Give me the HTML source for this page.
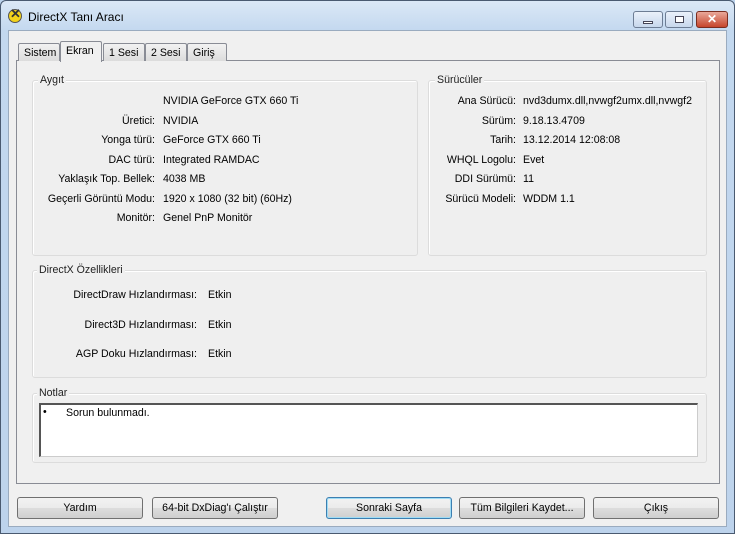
<!DOCTYPE html>
<html><head><meta charset="utf-8"><style>
*{margin:0;padding:0;box-sizing:border-box}
body{width:735px;height:534px;overflow:hidden;background:#bcd3ec;font-family:"Liberation Sans",sans-serif;font-size:10.6px;color:#000;position:relative}
.a{position:absolute}
.win{left:0;top:0;width:735px;height:534px;background:linear-gradient(#dbe8f6,#c3d8ef 30px,#bdd3ec);border:1px solid #4a5a70;border-radius:6px 6px 0 0}
.client{left:8px;top:30px;width:719px;height:497px;background:#f0f0f0;border:1px solid #9aabbf}
.panel{left:16px;top:60px;width:704px;height:424px;background:#f0f0f0;border:1px solid #898c95}
.grp{border:1px solid #dcdcdc;border-radius:3px;background:#efefef;box-shadow:inset 1px 1px 0 #fff}
.lg{background:#f0f0f0;padding:0 2px;color:#222}
.r{text-align:right;width:200px}
.tab{top:43px;height:18px;border:1px solid #898c95;border-bottom:none;background:linear-gradient(#f2f2f2,#dcdcdc);padding:3px 5px 0;border-radius:2px 2px 0 0}
.btn{top:497px;height:22px;border:1px solid #707070;border-radius:3px;background:linear-gradient(#f2f2f2 0,#ebebeb 50%,#dddddd 51%,#cfcfcf);text-align:center;line-height:20px}
.cb{top:11px;height:17px;border:1px solid #6d7d94;border-radius:3px;background:linear-gradient(#eaf1fa,#c7d7ec)}
</style></head><body>
<div class="a win"></div>
<div class="a" style="left:8px;top:9px;width:14px;height:14px;border-radius:50%;background:#f2d21a;border:1px solid #555"></div>
<div class="a" style="left:10px;top:6px;font-size:13px;font-weight:bold;color:#333">✕</div>
<div class="a" style="left:28px;top:10px;font-size:12px">DirectX Tanı Aracı</div>
<div class="a cb" style="left:633px;width:30px"><div class="a" style="left:9px;top:9px;width:10px;height:3px;background:#fff;border:1px solid #445"></div></div>
<div class="a cb" style="left:665px;width:28px"><div class="a" style="left:9px;top:4px;width:9px;height:7px;border:1px solid #445;background:#fff"></div></div>
<div class="a cb" style="left:696px;width:32px;background:linear-gradient(#e9a89a,#c6452c);border-color:#7a2d20;color:#fff;font-weight:bold;text-align:center;font-size:12px;line-height:15px">✕</div>
<div class="a client"></div>
<div class="a panel"></div>
<div class="a tab" style="left:18px;width:42px">Sistem</div>
<div class="a tab" style="left:60px;top:41px;height:21px;background:#f0f0f0;z-index:2;width:42px">Ekran</div>
<div class="a tab" style="left:103px;width:42px">1 Sesi</div>
<div class="a tab" style="left:145px;width:42px">2 Sesi</div>
<div class="a tab" style="left:187px;width:40px">Giriş</div>

<div class="a grp" style="left:32px;top:80px;width:386px;height:176px"></div>
<div class="a lg" style="left:38px;top:74px">Aygıt</div>
<div class="a grp" style="left:428px;top:80px;width:279px;height:176px"></div>
<div class="a lg" style="left:435px;top:74px">Sürücüler</div>
<div class="a grp" style="left:32px;top:270px;width:675px;height:108px"></div>
<div class="a lg" style="left:37px;top:264px">DirectX Özellikleri</div>
<div class="a grp" style="left:32px;top:393px;width:675px;height:70px"></div>
<div class="a lg" style="left:37px;top:387px">Notlar</div>
<div class="a" style="left:39px;top:403px;width:659px;height:54px;background:#fff;border:1px solid #ccc;border-top:2px solid #555;border-left:2px solid #555"></div>
<div class="a" style="left:43px;top:406px">•</div>
<div class="a" style="left:66px;top:407px">Sorun bulunmadı.</div>

<div class="a r" style="left:-45px;top:92px;line-height:19.5px">&nbsp;<br>Üretici:<br>Yonga türü:<br>DAC türü:<br>Yaklaşık Top. Bellek:<br>Geçerli Görüntü Modu:<br>Monitör:</div>
<div class="a" style="left:163px;top:92px;line-height:19.5px">NVIDIA GeForce GTX 660 Ti<br>NVIDIA<br>GeForce GTX 660 Ti<br>Integrated RAMDAC<br>4038 MB<br>1920 x 1080 (32 bit) (60Hz)<br>Genel PnP Monitör</div>
<div class="a r" style="left:316px;top:92px;line-height:19.5px">Ana Sürücü:<br>Sürüm:<br>Tarih:<br>WHQL Logolu:<br>DDI Sürümü:<br>Sürücü Modeli:</div>
<div class="a" style="left:523px;top:92px;line-height:19.5px;white-space:nowrap;width:178px;overflow:hidden">nvd3dumx.dll,nvwgf2umx.dll,nvwgf2<br>9.18.13.4709<br>13.12.2014 12:08:08<br>Evet<br>11<br>WDDM 1.1</div>
<div class="a r" style="left:-3px;top:281px;line-height:29.5px">DirectDraw Hızlandırması:<br>Direct3D Hızlandırması:<br>AGP Doku Hızlandırması:</div>
<div class="a" style="left:208px;top:281px;line-height:29.5px">Etkin<br>Etkin<br>Etkin</div>

<div class="a btn" style="left:17px;width:126px">Yardım</div>
<div class="a btn" style="left:152px;width:126px">64-bit DxDiag'ı Çalıştır</div>
<div class="a btn" style="left:326px;width:126px;border-color:#3c7fb1;box-shadow:inset 0 0 0 1px #9fdcf5">Sonraki Sayfa</div>
<div class="a btn" style="left:459px;width:126px">Tüm Bilgileri Kaydet...</div>
<div class="a btn" style="left:593px;width:126px">Çıkış</div>
</body></html>
